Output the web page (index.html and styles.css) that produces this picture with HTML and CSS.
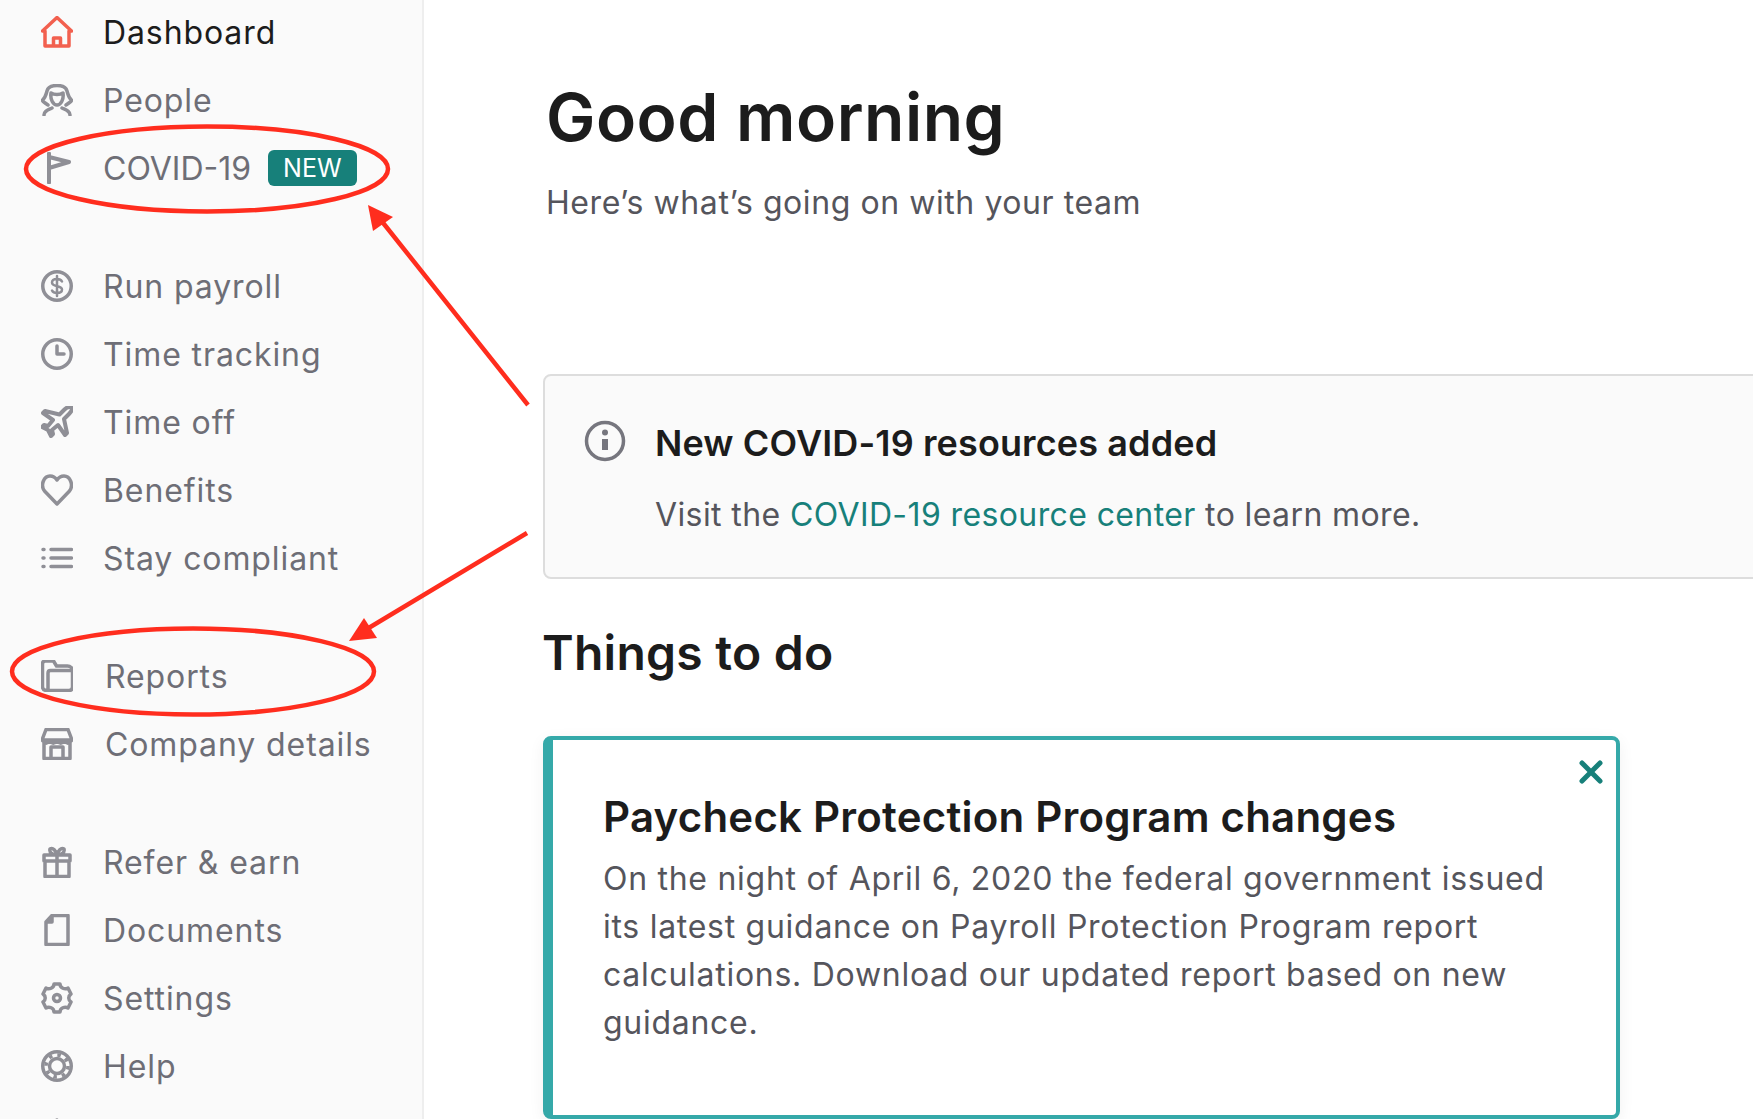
FILE: index.html
```html
<!DOCTYPE html>
<html lang="en">
<head>
    <meta charset="UTF-8">
    <title>Dashboard</title>
    <link rel="stylesheet" href="styles.css">
</head>
<body>
    <div class="app">
        <nav class="sidebar">
            <ul class="nav-group nav-group-first">
                <li class="nav-item active">
                    <svg class="nav-icon home" viewBox="0 0 32 32"><path d="M1.500 15 16 1.500 30.500 15h-2.500v15H4V15zM12.500 30v-8h7v8"/></svg>
                    <span>Dashboard</span>
                </li>
                <li class="nav-item">
                    <svg class="nav-icon" viewBox="0 0 32 32"><path d="M7 21c-3-2-6-4-5.500-5C4 14 5 11 6 7c1-4 5-5.500 10-5.500S25 3 26 7c1 4 2 7 4.500 9 .5 1-2.500 3-5.500 5M10 9c3 2 9 2 12 0 1 6-2 12-6 12s-7-6-6-12zM3 31c0-4 4-5 8-7M29 31c0-4-4-5-8-7"/></svg>
                    <span>People</span>
                </li>
                <li class="nav-item">
                    <svg class="nav-icon flag" viewBox="0 0 32 32"><path d="M8 1.500v29M8 5l20 5-20 6"/></svg>
                    <span class="caps">COVID-19</span>
                    <span class="badge">NEW</span>
                </li>
            </ul>
            <ul class="nav-group">
                <li class="nav-item">
                    <svg class="nav-icon" viewBox="0 0 32 32"><circle cx="16" cy="16" r="14.250"/><path class="thin" d="M21 11.500c-1-2-3-2.500-5-2.500-3 0-5 1.500-5 3.500 0 5 10 2.500 10 7 0 2-2 3.500-5 3.500-2 0-4-.5-5-2.500M16 6v20"/></svg>
                    <span>Run payroll</span>
                </li>
                <li class="nav-item">
                    <svg class="nav-icon" viewBox="0 0 32 32"><circle cx="16" cy="16" r="14.250"/><path d="M16 8v8h7"/></svg>
                    <span>Time tracking</span>
                </li>
                <li class="nav-item">
                    <svg class="nav-icon plane" viewBox="0 0 32 32"><path d="M30.500 1.500c-2-1-5 0-7 2l-5 5L4 5 2 7l10 7-5 6-4-1-2 2 6 3 3 6 2-2-1-4 6-5 7 10 2-2-3-14 5-5c2-2 4-5 2.500-7.500z"/></svg>
                    <span>Time off</span>
                </li>
                <li class="nav-item">
                    <svg class="nav-icon" viewBox="0 0 32 32"><path d="M16 30 3.500 17C-1 11 3 2 9 2c3 0 5 1 7 4 2-3 4-4 7-4 6 0 10 9 5.500 15z"/></svg>
                    <span>Benefits</span>
                </li>
                <li class="nav-item">
                    <svg class="nav-icon" viewBox="0 0 32 32"><path d="M10 7.500h20.500M10 16h20.500M10 24.500h20.500M2 7.500h1M2 16h1M2 24.500h1"/></svg>
                    <span>Stay compliant</span>
                </li>
            </ul>
            <ul class="nav-group">
                <li class="nav-item nudged">
                    <svg class="nav-icon" viewBox="0 0 32 32"><path d="M6 30.500c-3 0-4.500-1.500-4.500-4V4c0-2 1-3 3-3h8l3 5h11c3 0 5 2 5 5v16c0 2-1 3.500-3.500 3.500zM7 30V13c0-1.500 1-2.500 2.500-2.500H31"/></svg>
                    <span>Reports</span>
                </li>
                <li class="nav-item nudged">
                    <svg class="nav-icon" viewBox="0 0 32 32"><path d="M5 1.500h22L31 12H1zM3 12v18.500h26V12M10 30.500V19h12v11.500M1 12c3 4 5 4 7.500 1 2.500 3 5 3 7.500 0 2.500 3 5 3 7.500 0 2.500 3 4.500 3 7.500-1"/></svg>
                    <span>Company details</span>
                </li>
            </ul>
            <ul class="nav-group">
                <li class="nav-item">
                    <svg class="nav-icon" viewBox="0 0 32 32"><path d="M3 9h26v6H3zM4 15v15.500h24V15M16 9v21.500M16 9C12 9 8 7 9 3c3-2 6 2 7 6 1-4 4-8 7-6 1 4-3 6-7 6z"/></svg>
                    <span>Refer &amp; earn</span>
                </li>
                <li class="nav-item">
                    <svg class="nav-icon" viewBox="0 0 32 32"><path d="M11 1.500h16v29H5V8zM5 8h6V1.500"/></svg>
                    <span>Documents</span>
                </li>
                <li class="nav-item">
                    <svg class="nav-icon" viewBox="0 0 32 32"><path d="M13 2c0 4-5 6-8 4L2 12c3 2 3 6 0 8l3 6c3-2 8 0 8 4h6c0-4 5-6 8-4l3-6c-3-2-3-6 0-8l-3-6c-3 2-8 0-8-4z"/><circle cx="16" cy="16" r="3.500"/></svg>
                    <span>Settings</span>
                </li>
                <li class="nav-item">
                    <svg class="nav-icon" viewBox="0 0 32 32"><circle cx="16" cy="16" r="14.250"/><circle cx="16" cy="16" r="7.500"/><circle class="spokes" cx="16" cy="16" r="11" stroke-dasharray="3.500 5.140"/></svg>
                    <span>Help</span>
                </li>
                <li class="nav-item">
                    <svg class="nav-icon" viewBox="0 0 32 32"><path d="M16 2 3 12"/></svg>
                </li>
            </ul>
        </nav>

        <main class="content">
            <h1>Good morning</h1>
            <p class="subtitle">Here&rsquo;s what&rsquo;s going on with your team</p>

            <section class="notice">
                <svg class="notice-icon" viewBox="0 0 42 42"><circle cx="21" cy="21" r="18.500"/><circle class="dot" cx="21" cy="12.500" r="3"/><path d="M21 19v11"/></svg>
                <div>
                    <h3>New COVID-19 resources added</h3>
                    <p>Visit the <a href="#">COVID-19 resource center</a> to learn more.</p>
                </div>
            </section>

            <h2>Things to do</h2>

            <section class="task-card">
                <svg class="close-icon" viewBox="0 0 24 24"><path d="M3 3l18 18M21 3 3 21"/></svg>
                <h3>Paycheck Protection Program changes</h3>
                <p>On the night of April 6, 2020 the federal government issued its latest guidance on Payroll Protection Program report calculations. Download our updated report based on new guidance.</p>
            </section>
        </main>
    </div>

    <!-- red markup drawn on top of the screenshot -->
    <svg class="markup" viewBox="0 0 1753 1119">
        <ellipse cx="207" cy="169" rx="181" ry="42.500"/>
        <ellipse cx="193" cy="671.500" rx="181" ry="43"/>
        <path d="M528 405 380 219M527 533 362 632"/>
        <polygon points="368,205 393,217 373,231"/>
        <polygon points="349,641 364,618 377,638"/>
    </svg>
</body>
</html>
```

FILE: styles.css
```css
* {
    box-sizing: border-box;
}

html, body {
    height: 100%;
}

body {
    margin: 0;
    font-family: 'Inter', sans-serif;
    background-color: #fff;
    color: #55555c;
    overflow: hidden;
}

.app {
    display: flex;
    height: 1119px;
    overflow: hidden;
}

/* Sidebar */
.sidebar {
    flex: 0 0 424px;
    background: #fafafa;
    border-right: 2px solid #eee;
}

.nav-group {
    list-style: none;
    margin: 50px 0 0;
    padding: 0 0 0 41px;
}

.nav-group-first {
    margin-top: -2px;
}

.nav-item {
    display: flex;
    align-items: center;
    height: 68px;
    font-size: 32px;
    letter-spacing: 0.9px;
    color: #6e6e76;
}

.nav-item.active {
    color: #1c1c1c;
}

.nav-item .caps {
    letter-spacing: 0;
}

.nav-item.nudged > span {
    margin-left: 2px;
}

.nav-icon {
    flex: 0 0 32px;
    width: 32px;
    height: 32px;
    margin-right: 30px;
    fill: none;
    stroke: #8f8f96;
    stroke-width: 3.500;
    stroke-linejoin: round;
    stroke-linecap: round;
}

.nav-icon.home {
    stroke: #f2604f;
}

.nav-icon.flag {
    stroke-width: 4;
}

.nav-icon.plane {
    stroke-width: 4;
}

.nav-icon .thin {
    stroke-width: 2.500;
}

.nav-icon .spokes {
    stroke-linecap: butt;
}

.badge {
    margin-left: 17px;
    padding: 0 15px;
    height: 36px;
    line-height: 36px;
    border-radius: 6px;
    background: #17807a;
    color: #fff;
    font-size: 25px;
    letter-spacing: 0;
}

/* Main column */
.content {
    flex: 1;
    min-width: 0;
    padding: 76px 0 0 119px;
}

h1 {
    margin: 0 0 0 3px;
    font-size: 66px;
    line-height: 82px;
    font-weight: 600;
    letter-spacing: 0.5px;
    color: #1c1c1c;
}

.subtitle {
    margin: 22px 0 0 3px;
    font-size: 32px;
    line-height: 46px;
    letter-spacing: 0.57px;
    color: #55555c;
}

.notice {
    display: flex;
    width: 1300px;
    height: 205px;
    margin-top: 148px;
    padding: 44px 39px;
    background: #fafafa;
    border: 2px solid #ddd;
    border-radius: 8px;
}

.notice-icon {
    flex: 0 0 42px;
    width: 42px;
    height: 42px;
    margin-right: 29px;
    fill: none;
    stroke: #76767e;
    stroke-width: 3.500;
}

.notice-icon .dot {
    fill: #76767e;
    stroke: none;
}

.notice-icon path {
    stroke-width: 6;
}

.notice h3 {
    margin: 0;
    font-size: 36px;
    line-height: 46px;
    font-weight: 600;
    letter-spacing: 0.12px;
    color: #1c1c1c;
}

.notice p {
    margin: 26px 0 0;
    font-size: 32px;
    line-height: 46px;
    letter-spacing: 0.39px;
}

.notice a {
    color: #17807a;
    text-decoration: none;
}

h2 {
    margin: 44px 0 0 -1px;
    font-size: 48px;
    line-height: 60px;
    font-weight: 600;
    letter-spacing: 0.25px;
    color: #1c1c1c;
}

.task-card {
    position: relative;
    width: 1077px;
    height: 383px;
    margin-top: 53px;
    padding: 51px 60px 0 50px;
    background: #fff;
    border: 4px solid #35a9a9;
    border-left-width: 10px;
    border-radius: 8px;
    box-shadow: 0 4px 16px rgba(0, 0, 0, 0.06);
}

.task-card h3 {
    margin: 0;
    font-size: 42px;
    line-height: 52px;
    font-weight: 600;
    letter-spacing: 0.22px;
    color: #1c1c1c;
}

.task-card p {
    margin: 12px 0 0;
    font-size: 32px;
    line-height: 48px;
    letter-spacing: 0.72px;
}

.close-icon {
    position: absolute;
    top: 20px;
    right: 13px;
    width: 24px;
    height: 24px;
    fill: none;
    stroke: #17807a;
    stroke-width: 5;
    stroke-linecap: round;
}

/* Annotations */
.markup {
    position: absolute;
    top: 0;
    left: 0;
    width: 1753px;
    height: 1119px;
    pointer-events: none;
}

.markup ellipse, .markup path {
    fill: none;
    stroke: #ff2d1e;
    stroke-width: 4.500;
}

.markup polygon {
    fill: #ff2d1e;
}
```
